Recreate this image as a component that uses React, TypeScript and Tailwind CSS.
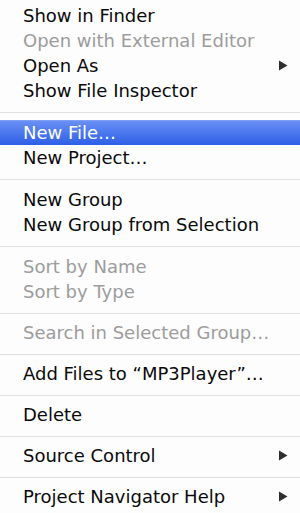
type Item =
  | { kind: "sep"; tall?: boolean }
  | { kind: "item"; label: string; disabled?: boolean; selected?: boolean; submenu?: boolean };

const items: Item[] = [
  { kind: "item", label: "Show in Finder" },
  { kind: "item", label: "Open with External Editor", disabled: true },
  { kind: "item", label: "Open As", submenu: true },
  { kind: "item", label: "Show File Inspector" },
  { kind: "sep", tall: true },
  { kind: "item", label: "New File…", selected: true },
  { kind: "item", label: "New Project…" },
  { kind: "sep", tall: true },
  { kind: "item", label: "New Group" },
  { kind: "item", label: "New Group from Selection" },
  { kind: "sep", tall: true },
  { kind: "item", label: "Sort by Name", disabled: true },
  { kind: "item", label: "Sort by Type", disabled: true },
  { kind: "sep" },
  { kind: "item", label: "Search in Selected Group…", disabled: true },
  { kind: "sep" },
  { kind: "item", label: "Add Files to “MP3Player”…" },
  { kind: "sep" },
  { kind: "item", label: "Delete" },
  { kind: "sep" },
  { kind: "item", label: "Source Control", submenu: true },
  { kind: "sep" },
  { kind: "item", label: "Project Navigator Help", submenu: true },
];

function Arrow({ selected }: { selected?: boolean }) {
  return (
    <svg width="10" height="11" viewBox="0 0 10 11" className="shrink-0">
      <path d="M1 0.5 L9.5 5.5 L1 10.5 Z" fill={selected ? "#fff" : "#2e2e2e"} />
    </svg>
  );
}

function MenuRow({ item }: { item: Extract<Item, { kind: "item" }> }) {
  const tone = item.selected
    ? "text-white bg-gradient-to-b from-[#6a8ff5] to-[#2d5ee6] border-t border-[#7d9ef3]"
    : item.disabled
      ? "text-[#9c9c9c]"
      : "text-[#0a0a0a]";
  return (
    <div className={`h-[25px] flex items-center justify-between pl-[23px] pr-[12px] ${tone}`}>
      <span className="whitespace-nowrap leading-none">{item.label}</span>
      {item.submenu && <Arrow selected={item.selected} />}
    </div>
  );
}

export default function App() {
  return (
    <div
      className="w-[300px] h-[513px] overflow-hidden bg-[#fdfdfd] pt-[3px] text-[18px]"
      style={{ fontFamily: '"DejaVu Sans", "Liberation Sans", sans-serif' }}
    >
      {items.map((item, i) =>
        item.kind === "sep" ? (
          <div key={i} className={item.tall ? "h-[17px] pt-[9px]" : "h-[16px] pt-[9px]"}>
            <div className="h-px w-full bg-[#e0e0e0]" />
          </div>
        ) : (
          <MenuRow key={i} item={item} />
        ),
      )}
    </div>
  );
}
